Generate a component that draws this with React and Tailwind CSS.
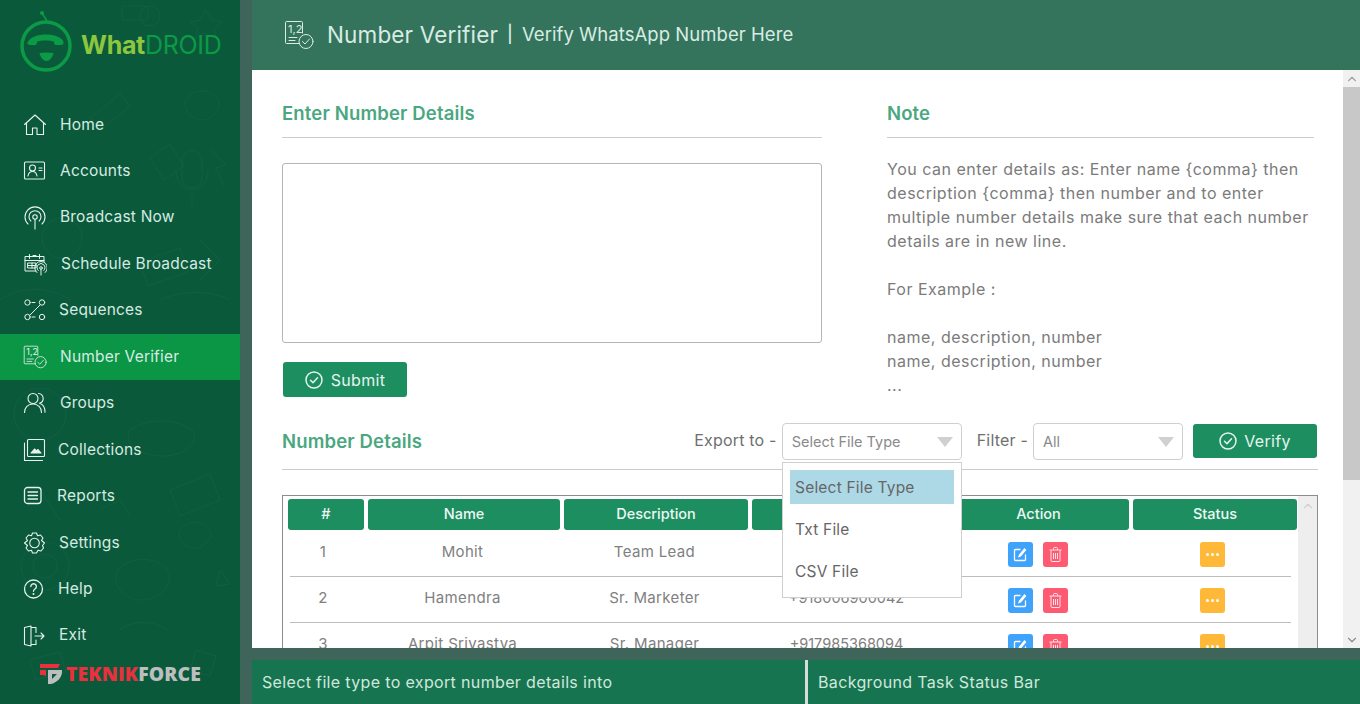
import React from 'react';
import { ChevronUp, ChevronDown } from 'lucide-react';

const sans = { fontFamily: 'Inter, "Open Sans", sans-serif' };

// nav icons are hand drawn, 24px box, thin outline like the original set
function NavIcon({ name }) {
    const common = { width: 24, height: 24, viewBox: '0 0 24 24', fill: 'none', stroke: '#e8f3ee', strokeWidth: 1.1, strokeLinecap: 'round', strokeLinejoin: 'round' };
    switch (name) {
        case 'home':
            return <svg {...common}><path d="M1.5 11.500 12 2l10.500 9.500M3.500 10v11.500h6v-6.500h4.500v6.500h6.500V10" /></svg>;
        case 'accounts':
            return <svg {...common}><rect x="1.500" y="3" width="20" height="17" rx="1" /><circle cx="9.500" cy="9" r="3" /><path d="M5 17c.5-3 2-4.500 4.500-4.500s4 1.500 4.500 4.500M16 9h3M16 11.500h3" /></svg>;
        case 'broadcast':
            return <svg {...common}><circle cx="12" cy="11" r="2.200" /><path d="M12 13.200V23M7.800 15a6 6 0 1 1 8.400 0M5 18a10 10 0 1 1 14 0" /></svg>;
        case 'schedule':
            return <svg {...common} strokeWidth={1}><path d="M13 19H2V4.500h19V10M2 8.500h19M6.500 2.500v4M16.500 2.500v4M10 3.500h3" /><path d="M5 11h8v5H5zM5 13.500h8M9 11v5" /><circle cx="18" cy="16" r="1.300" /><path d="M18 17.300V23M15.200 18.500a4 4 0 1 1 5.600 0M13.800 20.500a6.300 6.300 0 1 1 8.400 0" /></svg>;
        case 'sequences':
            return <svg {...common} strokeWidth={1}><circle cx="4.500" cy="4.500" r="2.700" /><circle cx="19" cy="4.500" r="2.700" /><circle cx="4.500" cy="19" r="2.700" /><circle cx="19" cy="19" r="2.700" /><path d="M9 4.500h3M9 19h3M17 7 7 17" /></svg>;
        case 'verifier':
            return <NumberIcon />;
        case 'groups':
            return <svg {...common}><circle cx="10" cy="7.500" r="5" /><path d="M1.500 21.500c0-5 3.500-8.500 8.500-8.500s8.500 3.500 8.500 8.500M15.500 2.500a5 5 0 0 1 1 9.800c3.500 1 5.500 4.500 5.500 9" /></svg>;
        case 'collections':
            return <svg {...common}><rect x="4.500" y="1.500" width="17" height="17" rx="1" /><path d="M1.500 5v17.500h18" /><path d="m8 15 3.500-4 2 2 1.500-1.500 3 3.500z" fill="#e8f3ee" /></svg>;
        case 'reports':
            return <svg {...common} strokeWidth={1.3}><rect x="1.500" y="2.500" width="16.500" height="16" rx="3" transform="translate(0 1)" /><path d="M5 8h9.500M5 11.500h9.500M5 15h9.500" /></svg>;
        case 'settings':
            return <svg {...common}><circle cx="11.500" cy="12" r="4.800" /><path d="M9.500 2h4l1 2.800 3-.8 2.500 3-1.500 2.500L21.500 12l-2 2.500 1 2.500-2.500 3-3-.8-1.500 2.800h-4l-1-2.800-3 .8L3 17l1.500-2.500L1.500 12l3-2.500L3 7l2.500-3 3 .8z" /></svg>;
        case 'help':
            return <svg {...common} strokeWidth={1.3}><circle cx="10.500" cy="12" r="9" /><path d="M7.800 9.500a2.800 2.800 0 1 1 4.200 2.500c-1 .6-1.500 1.200-1.500 2.300" /><path d="M10.500 17v.01" strokeWidth={2} /></svg>;
        default:
            return <svg {...common}><path d="M1.500 3.500 8 2v20l-6.500-1.500zM8 3.500h5v5M13 16v4.500H8M12 12h8.500M18 9l3 3-3 3" /></svg>;
    }
}

function NumberIcon({ size = 24, color = '#e8f3ee' }) {
    return (
        <svg width={size} height={size} viewBox="0 0 30 30" fill="none" stroke={color} strokeWidth="1" strokeLinecap="round" strokeLinejoin="round">
            <path d="M15.500 23.500H2.500a1 1 0 0 1-1-1V2.500a1 1 0 0 1 1-1h15a1 1 0 0 1 1 1V13" />
            <path d="M5 17.500h8M5 20.500h6" />
            <text x="4" y="12.500" fontSize="11" fontFamily="Inter, sans-serif" fill={color} stroke="none">1,2</text>
            <circle cx="22" cy="21.500" r="7" />
            <path d="m18.500 21.500 2.500 2.500 4.500-5" />
        </svg>
    );
}

function CheckCircle({ size = 18 }) {
    return (
        <svg width={size} height={size} viewBox="0 0 18 18" fill="none" stroke="#e6f4ee" strokeWidth="1.500" strokeLinecap="round" strokeLinejoin="round">
            <circle cx="9" cy="9" r="8" />
            <path d="m5.500 9.200 2.500 2.500 4.500-5" />
        </svg>
    );
}

function EditBtn() {
    return (
        <span className="flex h-[25px] w-[25px] items-center justify-center rounded-[3px] bg-[#3fa2fb]">
            <svg width="14" height="14" viewBox="0 0 14 14" fill="none" stroke="#fff" strokeWidth="1.300" strokeLinecap="round">
                <path d="M7 1.500H2.500a1 1 0 0 0-1 1v9a1 1 0 0 0 1 1h9a1 1 0 0 0 1-1V7" />
                <path d="M11.500 1 6.500 7 6 8.500 7.500 8l5-6z" fill="#fff" />
            </svg>
        </span>
    );
}

function DeleteBtn() {
    return (
        <span className="flex h-[25px] w-[25px] items-center justify-center rounded-[3px] bg-[#fe5a72]">
            <svg width="13" height="15" viewBox="0 0 13 15" fill="none" stroke="#ffe3e8" strokeWidth="1">
                <path d="M.5 3h12M4.500 3V1.500a1 1 0 0 1 1-1h2a1 1 0 0 1 1 1V3M2 3v10.500a1 1 0 0 0 1 1h7a1 1 0 0 0 1-1V3M4.500 6v6M6.500 6v6M8.500 6v6" />
            </svg>
        </span>
    );
}

function MoreBtn() {
    return (
        <span className="flex h-[25px] w-[25px] items-center justify-center gap-[1.500px] rounded-[3px] bg-[#ffb838]">
            <span className="h-[3.500px] w-[3.500px] rounded-full bg-white" />
            <span className="h-[3.500px] w-[3.500px] rounded-full bg-white" />
            <span className="h-[3.500px] w-[3.500px] rounded-full bg-white" />
        </span>
    );
}

function Logo() {
    return (
        <div className="flex h-[101.500px] items-start pl-[20px] pt-[10px]">
            <svg width="54" height="64" viewBox="0 0 54 64" fill="none">
                <path d="M27 11 22 3" stroke="#0b9a45" strokeWidth="1.500" />
                <circle cx="22" cy="3" r="2" fill="#0b9a45" />
                <circle cx="26" cy="36" r="24" stroke="#0b9a45" strokeWidth="3.500" />
                <path d="M8 32c2-5 10-7.500 18-7.500s16 2.500 17.500 7.500c.3 2-.7 3-2.500 3h-5c-1.500 0-2-1.500-2-3.500-3-1.500-14-1.500-17 0 0 2-.5 3.500-2 3.500h-5c-2 0-2.800-1-2.500-3z" fill="#0b9a45" />
                <path d="M19.500 43c4-.8 10-.8 14 0-1 4.500-4 8-7 8s-6-3.500-7-8z" fill="#0b9a45" />
            </svg>
            <div className="mt-[20px] ml-[7px] text-[25px] leading-[30px] tracking-[-0.3px] whitespace-nowrap" style={sans}>
                <span className="font-bold text-[#8dc63f]">What</span>
                <span className="text-[#0b9a45]">DROID</span>
            </div>
        </div>
    );
}

function Doodles() {
    // faint chat wallpaper behind the nav
    return (
        <svg className="absolute inset-0" width="240" height="704" viewBox="0 0 240 704" fill="none" stroke="#125f43" strokeWidth="1">
            <circle cx="150" cy="16" r="10" /><rect x="122" y="6" width="26" height="14" rx="3" />
            <path d="M200 20l6-10 6 10 10 2-8 6 2 10-10-5-10 5 2-10-8-6z" />
            <path d="M186 100c6-12 26-12 32 0 4 10-6 20-16 20s-20-10-16-20z" />
            <path d="M90 118l30-24 10 12-30 24z" /><rect x="182" y="150" width="20" height="38" rx="10" /><path d="M176 170c0 26 32 26 32 0M192 196v14" />
            <path d="M150 158l20-14 14 22-20 14zM210 150l16 14-10 4 8 18" />
            <circle cx="62" cy="238" r="20" /><path d="M140 262l40-14 8 24-40 14zM200 240l20 20-20 20" />
            <path d="M0 300c20-14 50-14 70 0M160 300c20-10 50-10 70 0" />
            <circle cx="40" cy="414" r="26" /><path d="M130 430c16-12 46-12 62 0 8 14-8 26-30 26s-40-12-32-26z" />
            <path d="M170 490l40-16 10 26-40 16zM40 490l20 30M100 510l20-10 10 16" />
            <circle cx="45" cy="566" r="24" /><circle cx="45" cy="566" r="12" /><path d="M118 570c10-14 40-14 50 0 6 14-8 30-26 30s-32-16-24-30z" />
            <path d="M180 530c6-10 24-10 30 0 4 8-6 18-16 18s-18-10-14-18zM220 570l10 14-14 2z" />
            <path d="M120 630c10-10 36-10 46 0M196 650l20 6-6 20-20-6zM30 660l30-8 6 20-30 8z" />
        </svg>
    );
}

const navItems = [
    { icon: 'home', label: 'Home', w: 'w-[60px]' },
    { icon: 'accounts', label: 'Accounts', w: 'w-[60px]' },
    { icon: 'broadcast', label: 'Broadcast Now', w: 'w-[60px]' },
    { icon: 'schedule', label: 'Schedule Broadcast', w: 'w-[61px]' },
    { icon: 'sequences', label: 'Sequences', w: 'w-[59px]' },
    { icon: 'verifier', label: 'Number Verifier', w: 'w-[60px]', active: true },
    { icon: 'groups', label: 'Groups', w: 'w-[60px]' },
    { icon: 'collections', label: 'Collections', w: 'w-[58px]' },
    { icon: 'reports', label: 'Reports', w: 'w-[57px]' },
    { icon: 'settings', label: 'Settings', w: 'w-[59px]' },
    { icon: 'help', label: 'Help', w: 'w-[58px]' },
    { icon: 'exit', label: 'Exit', w: 'w-[59px]' },
];

function Sidebar() {
    return (
        <aside className="relative h-[704px] w-[240px] shrink-0 overflow-hidden bg-[#0b593b]">
            <Doodles />
            <div className="relative">
                <Logo />
                <nav>
                    {navItems.map(item => (
                        <div key={item.label} className={`flex h-[46.45px] items-center text-[15.5px] tracking-[0.2px] text-[#d5ebe2] ${item.active ? 'bg-[#0a9645]' : ''}`}>
                            <div className={`${item.w} flex shrink-0 items-center pl-[23px]`}><NavIcon name={item.icon} /></div>
                            <span className="whitespace-nowrap pb-[1px]">{item.label}</span>
                        </div>
                    ))}
                </nav>
                <div className="mt-[3px] flex items-center pl-[40px]">
                    <svg width="22" height="22" viewBox="0 0 22 22">
                        <path d="M0 1h20l-2 4H0zM0 7h6v6L3 12H0z" fill="#e8303f" />
                        <path d="M8 7h14v2c0 6-6 11-11 12h-3zM12 11v5l5-5z" fill="#bcbfbf" fillRule="evenodd" />
                    </svg>
                    <div className="ml-[4px] text-[19.400px] leading-[24px] font-extrabold tracking-[0.1px]" style={{ fontFamily: '"Open Sans", sans-serif' }}>
                        <span className="text-[#e8303f]">TEKNIK</span><span className="text-[#bcbfbf]">FORCE</span>
                    </div>
                </div>
            </div>
        </aside>
    );
}

function SectionTitle({ children, className }) {
    return <h2 className={`text-[18.500px] leading-[24px] font-semibold tracking-[0.15px] text-[#4aa77f] ${className || ''}`}>{children}</h2>;
}

function FakeSelect({ width, text }) {
    return (
        <div className={`${width} flex h-[37px] items-center justify-between rounded-[4px] border border-[#cfcfcf] bg-white pr-[8px] pl-[9px] text-[14.500px] text-[#8a8a8a]`}>
            <span>{text}</span>
            <span className="h-0 w-0 border-x-[8px] border-t-[10px] border-x-transparent border-t-[#d0d0d0]" />
        </div>
    );
}

const rows = [
    { id: 1, name: 'Mohit', desc: 'Team Lead', number: '' },
    { id: 2, name: 'Hamendra', desc: 'Sr. Marketer', number: '+918006900042' },
    { id: 3, name: 'Arpit Srivastva', desc: 'Sr. Manager', number: '+917985368094' },
];

const cols = 'grid grid-cols-[76px_192px_184px_192px_181px_164px] gap-x-[4px]';

function NumberTable() {
    return (
        <div className="mt-[25px] flex h-[200px] border border-[#8c8c8c] bg-white">
            <div className="min-w-0 flex-1 pt-[3px] pl-[5px]">
                <div className={`${cols} mb-[1px] text-[14.500px] text-[#eef7f3]`}>
                    {['#', 'Name', 'Description', 'Number', 'Action', 'Status'].map(h => (
                        <div key={h} className="flex h-[31px] items-center justify-center rounded-[3px] bg-[#1c8e60] pb-[1px] font-medium">{h}</div>
                    ))}
                </div>
                {rows.map(r => (
                    <div key={r.id}>
                        <div className={`${cols} h-[45px] text-[15px] tracking-[0.35px] text-[#808080]`}>
                            <div className="flex h-[42px] items-center justify-center pr-[6px]">{r.id}</div>
                            <div className="flex h-[42px] items-center justify-center pr-[3px] whitespace-nowrap">{r.name}</div>
                            <div className="flex h-[42px] items-center justify-center pr-[3px] whitespace-nowrap">{r.desc}</div>
                            <div className="flex h-[42px] items-center justify-center pr-[3px] text-[14.500px] tracking-[0px]">{r.number}</div>
                            <div className="flex h-[45px] items-center justify-center gap-[10px] pt-[2px] pr-[2px]"><EditBtn /><DeleteBtn /></div>
                            <div className="flex h-[45px] items-center justify-center pt-[2px] pr-[5px]"><MoreBtn /></div>
                        </div>
                        <div className="ml-[2px] h-px w-[1001px] bg-[#bdbdbd]" />
                    </div>
                ))}
            </div>
            <div className="flex w-[19px] shrink-0 flex-col items-center bg-[#eeeeee] pt-[3px] text-[#d0d0d0]">
                <ChevronUp size={14} />
            </div>
        </div>
    );
}

function Content() {
    return (
        <div className="relative h-[578px] flex-1 overflow-hidden bg-white pt-[31px] pl-[30px] text-[#7b7b7b]">
            <div className="flex">
                <div className="w-[540px]">
                    <SectionTitle className="border-b border-[#cccccc] pb-[12px]">Enter Number Details</SectionTitle>
                    <div className="mt-[25px] h-[180px] rounded-[3px] border border-[#b5b5b5]" />
                    <button className="mt-[19px] ml-[1px] flex h-[35px] w-[124px] items-center justify-center gap-[8px] rounded-[3px] bg-[#1c8e60] text-[16px] tracking-[0.3px] text-[#e6f4ee]">
                        <CheckCircle />
                        Submit
                    </button>
                </div>
                <div className="ml-[65px] w-[427px]">
                    <SectionTitle className="border-b border-[#cccccc] pb-[12px]">Note</SectionTitle>
                    <div className="mt-[19px] text-[16px] leading-[24px] tracking-[0.5px]">
                        <p>You can enter details as: Enter name {'{comma}'} then description {'{comma}'} then number and to enter multiple number details make sure that each number details are in new line.</p>
                        <p className="mt-[24px]">For Example :</p>
                        <p className="mt-[24px]">name, description, number</p>
                        <p>name, description, number</p>
                        <p>...</p>
                    </div>
                </div>
            </div>
            <div className="absolute top-[353px] right-[25px] left-[30px]">
                <div className="flex h-[47px] items-start border-b border-[#cccccc]">
                    <SectionTitle className="mt-[6px] flex-1">Number Details</SectionTitle>
                    <span className="mt-[5px] mr-[5px] text-[16px] tracking-[0.2px] text-[#6f6f6f]">Export to -</span>
                    <FakeSelect width="w-[180px]" text="Select File Type" />
                    <span className="mt-[5px] mr-[5px] ml-[15px] text-[16px] tracking-[0.2px] text-[#6f6f6f]">Filter -</span>
                    <FakeSelect width="w-[150px]" text="All" />
                    <button className="mt-[1px] mr-[1px] ml-[10px] flex h-[34px] w-[124px] items-center justify-center gap-[7px] rounded-[3px] bg-[#1c8e60] text-[16px] tracking-[0.3px] text-[#e6f4ee]">
                        <CheckCircle />
                        Verify
                    </button>
                </div>
                <NumberTable />
            </div>
            {/* open dropdown of the export select */}
            <div className="absolute top-[392px] left-[530px] flex h-[136px] w-[180px] flex-col border border-[#cfcfcf] bg-white px-[7px] pt-[7px] text-[15.500px] tracking-[0.2px] text-[#666666]">
                <div className="flex h-[34px] items-center bg-[#add8e6] px-[5px] pt-[1px]">Select File Type</div>
                <div className="flex h-[42px] items-center px-[5px] pt-[9px]">Txt File</div>
                <div className="flex h-[42px] items-center px-[5px] pt-[9px]">CSV File</div>
            </div>
        </div>
    );
}

function PageScrollbar() {
    return (
        <div className="flex h-[578px] w-[17px] shrink-0 flex-col items-center bg-[#f1f1f1]">
            <div className="flex h-[17px] items-center text-[#a3a3a3]"><ChevronUp size={14} /></div>
            <div className="h-[393px] w-full bg-[#c8c8c8]" />
            <div className="flex-1" />
            <div className="flex h-[17px] items-center text-[#8a8a8a]"><ChevronDown size={14} /></div>
        </div>
    );
}

export default function App() {
    return (
        <div className="flex h-[704px] w-[1360px] overflow-hidden bg-[#3f6459]" style={sans}>
            <Sidebar />
            <div className="ml-[12px] flex min-w-0 flex-1 flex-col">
                <header className="flex h-[70px] items-center bg-[#35745c] pl-[32px] text-[#d8ece4]">
                    <NumberIcon size={30} color="#d8ece4" />
                    <span className="ml-[13px] text-[22.500px] tracking-[0.15px]">Number Verifier</span>
                    <span className="mr-[9px] ml-[9px] text-[17px] font-medium">|</span>
                    <span className="text-[18.500px] tracking-[0.05px]">Verify WhatsApp Number Here</span>
                </header>
                <div className="flex">
                    <Content />
                    <PageScrollbar />
                </div>
                <div className="mt-[12px] flex h-[44px] items-center bg-[#177450] text-[16px] tracking-[0.35px] text-[#cfe8dd]">
                    <div className="w-[553px] pl-[10px]">Select file type to export number details into</div>
                    <div className="h-full w-[3px] bg-[#d5dcd9]" />
                    <div className="pl-[10px]">Background Task Status Bar</div>
                </div>
            </div>
        </div>
    );
}
